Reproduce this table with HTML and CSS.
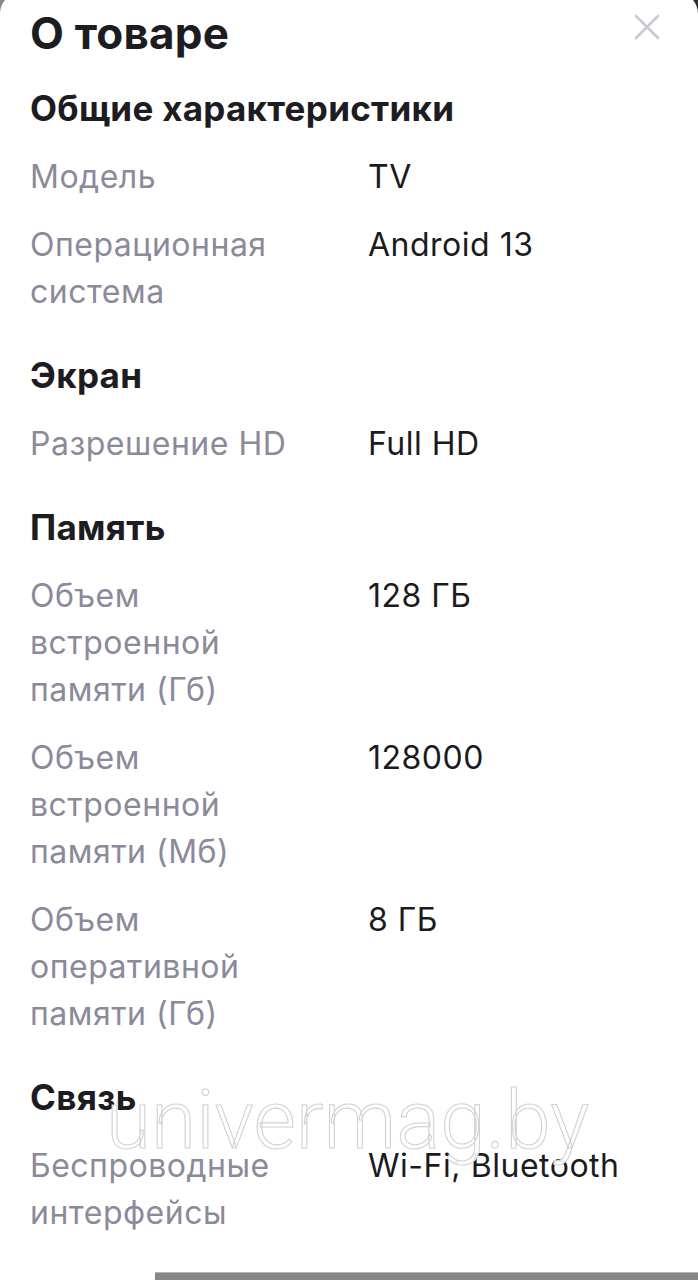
FILE: index.html
```html
<!DOCTYPE html>
<html lang="ru">
<head>
<meta charset="utf-8">
<title>О товаре</title>
<link rel="stylesheet" href="styles.css">
</head>
<body>
<div class="screen">
  <div class="sheet">
    <header class="head">
      <h1 class="title">О товаре</h1>
      <button class="close" aria-label="Закрыть">
        <svg width="26" height="26" viewBox="0 0 26 26"><path d="M2 2 L24 24 M24 2 L2 24" stroke="#c9c8d9" stroke-width="2.6" stroke-linecap="round" fill="none"/></svg>
      </button>
    </header>

    <section class="group">
      <h2 class="group-title">Общие характеристики</h2>
      <dl class="specs">
        <div class="row"><dt>Модель</dt><dd>TV</dd></div>
        <div class="row"><dt>Операционная система</dt><dd>Android 13</dd></div>
      </dl>
    </section>

    <section class="group">
      <h2 class="group-title">Экран</h2>
      <dl class="specs">
        <div class="row"><dt>Разрешение HD</dt><dd>Full HD</dd></div>
      </dl>
    </section>

    <section class="group">
      <h2 class="group-title">Память</h2>
      <dl class="specs">
        <div class="row"><dt>Объем встроенной памяти (Гб)</dt><dd>128 ГБ</dd></div>
        <div class="row"><dt>Объем встроенной памяти (Мб)</dt><dd>128000</dd></div>
        <div class="row"><dt>Объем оперативной памяти (Гб)</dt><dd>8 ГБ</dd></div>
      </dl>
    </section>

    <section class="group">
      <h2 class="group-title">Связь</h2>
      <dl class="specs">
        <div class="row"><dt>Беспроводные интерфейсы</dt><dd>Wi-Fi; Bluetooth</dd></div>
      </dl>
    </section>

    <div class="watermark">univermag.by</div>
    <div class="bar"></div>
  </div>
</div>
</body>
</html>
```

FILE: styles.css
```css
html, body {
  margin: 0;
  padding: 0;
}
body {
  background: linear-gradient(90deg, #8a8a8a 0%, #555 50%, #2e2e2e 100%);
  font-family: Inter, "Noto Sans", sans-serif;
  overflow: hidden;
}
.screen {
  width: 698px;
  height: 1280px;
  overflow: hidden;
}
.sheet {
  position: relative;
  background: #fff;
  border-radius: 22px 22px 0 0;
  margin-top: -8px;
  height: 1288px;
  padding: 0 30px;
  box-sizing: border-box;
  display: flex;
  flex-direction: column;
}
.head {
  display: flex;
  align-items: flex-start;
  justify-content: space-between;
  padding-top: 14px;
}
.title {
  margin: 0;
  font-size: 44px;
  line-height: 54px;
  font-weight: 700;
  color: #1c1c21;
  letter-spacing: 0.2px;
}
.close {
  border: 0;
  background: none;
  padding: 0;
  margin: 8px 8px 0 0;
  width: 26px;
  height: 26px;
}
.group {
  margin-top: 24px;
}
.group + .group {
  margin-top: 36px;
}
.group-title {
  margin: 0 0 21px;
  font-size: 35px;
  line-height: 48px;
  font-weight: 700;
  color: #1c1c21;
  letter-spacing: 0.3px;
}
.specs {
  margin: 0;
  display: flex;
  flex-direction: column;
  gap: 21px;
}
.row {
  display: grid;
  grid-template-columns: 338px 1fr;
  font-size: 32px;
  line-height: 47px;
  letter-spacing: 0.5px;
}
.row dt {
  color: #8b8a9b;
  width: 270px;
}
.row dd {
  margin: 0;
  color: #1b1b1e;
}
.watermark {
  position: absolute;
  left: 106px;
  top: 1078px;
  font-family: Roboto, sans-serif;
  font-weight: 300;
  font-size: 82px;
  line-height: 100px;
  color: rgba(255,255,255,0.92);
  -webkit-text-stroke: 1.1px #d2d2d2;
  pointer-events: none;
}
.bar {
  margin-top: auto;
  margin-left: 125px;
  margin-right: -30px;
  height: 7px;
  background: #878787;
  border-top: 1px solid #b5b5b5;
}
```
